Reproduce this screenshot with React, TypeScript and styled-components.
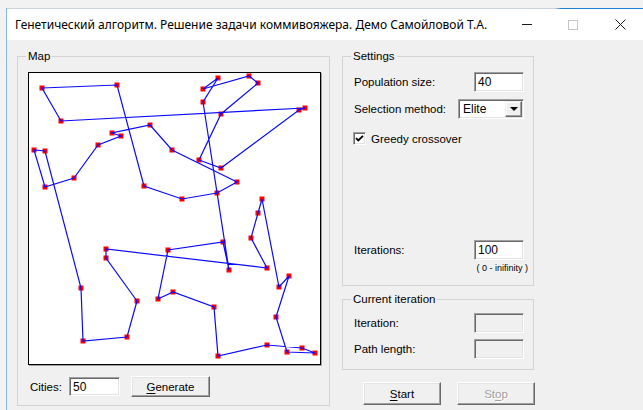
import React from 'react';
import styled, { createGlobalStyle } from 'styled-components';

const GlobalStyle = createGlobalStyle`
  html, body { margin: 0; padding: 0; }
  body {
    background: #f2f2f2;
    font-family: "Liberation Sans", Arial, sans-serif;
    color: #000;
  }
`;

// tour in visiting order, page coordinates
const tour: [number, number][] = [
  [42, 88], [117, 85], [144, 186], [182, 199], [217, 193], [237, 182], [172, 150], [150, 125],
  [112, 133], [121, 136], [98, 145], [74, 178], [45, 187], [34, 150], [45, 151], [81, 288],
  [83, 341], [127, 337], [137, 301], [106, 258], [106, 249], [267, 268], [251, 238], [258, 213],
  [262, 199], [279, 287], [289, 276], [276, 317], [287, 352], [315, 353], [302, 348], [267, 345],
  [218, 356], [214, 307], [173, 292], [158, 299], [168, 250], [223, 242], [229, 270], [203, 102],
  [218, 78], [203, 89], [249, 76], [258, 83], [221, 114], [199, 160], [221, 168], [299, 110],
  [305, 108], [61, 121],
];

const Screen = styled.div`
  width: 643px;
  height: 410px;
  overflow: hidden;
  box-sizing: border-box;
  padding: 8px 0 0 6px;
  background: #f2f2f2;
`;

const Window = styled.div`
  width: 638px;
  height: 402px;
  box-sizing: border-box;
  border-left: 1px solid #86b6e0;
  display: flex;
  flex-direction: column;
  background: #f0f0f0;
`;

const AccentLine = styled.div`
  height: 1px;
  background: linear-gradient(to right, #c9d2db 0%, #c9d2db 86%, #1a7fd6 87%, #1a7fd6 100%);
`;

const TitleBar = styled.div`
  height: 31px;
  background: #fff;
  display: flex;
  align-items: center;
  padding-left: 8px;
`;

const Title = styled.div`
  flex: 1;
  font-family: "Noto Sans", "Open Sans", sans-serif;
  font-size: 12px;
  white-space: nowrap;
  overflow: hidden;
`;

const CaptionButton = styled.div<{ $w: number }>`
  width: ${p => p.$w}px;
  height: 31px;
  display: flex;
  align-items: center;
  justify-content: center;
`;

const MinGlyph = styled.div`
  width: 10px;
  height: 1px;
  background: #1a1a1a;
`;

const MaxGlyph = styled.div`
  width: 10px;
  height: 10px;
  box-sizing: border-box;
  border: 1px solid #c6c6c6;
`;

const Client = styled.div`
  flex: 1;
  display: flex;
  gap: 12px;
  padding: 10px 0 0 10px;
`;

const Group = styled.fieldset<{ $w: number; $h: number }>`
  margin: 0;
  padding: 0;
  min-width: 0;
  box-sizing: border-box;
  width: ${p => p.$w}px;
  height: ${p => p.$h}px;
  border: 1px solid #d3d3d3;
`;

const Legend = styled.legend`
  margin-left: 8px;
  padding: 0 2px;
  font-size: 11.5px;
  line-height: 13px;
`;

const MapBody = styled.div`
  padding: 9px 10px 0 10px;
`;

const Canvas = styled.div`
  width: 293px;
  height: 293px;
  box-sizing: border-box;
  background: #fff;
  border: 1px solid #000;
  box-shadow: 1px 1px 0 #a0a0a0;
  svg { display: block; }
`;

const CitiesRow = styled.div`
  margin-top: 11px;
  height: 21px;
  display: flex;
  align-items: center;
  padding-left: 2px;
`;

const Label = styled.span`
  font-size: 11.5px;
  white-space: nowrap;
`;

const TextBox = styled.input<{ $w: number }>`
  width: ${p => p.$w}px;
  height: 20px;
  box-sizing: border-box;
  margin: 0;
  padding: 0 0 0 3px;
  background: #fff;
  border-style: solid;
  border-width: 1px;
  border-color: #a0a0a0 #fff #fff #a0a0a0;
  box-shadow: inset 1px 1px 0 #696969, inset -1px -1px 0 #e3e3e3;
  font-family: "Liberation Sans", Arial, sans-serif;
  font-size: 12px;
  color: #000;
  outline: none;
  &:disabled { background: #f0f0f0; }
`;

const Button = styled.button<{ $w: number; $h: number }>`
  width: ${p => p.$w}px;
  height: ${p => p.$h}px;
  margin: 0;
  padding: 0;
  background: #f0f0f0;
  border-style: solid;
  border-width: 1px;
  border-color: #fff #696969 #696969 #fff;
  box-shadow: inset -1px -1px 0 #a0a0a0, inset 1px 1px 0 #e3e3e3;
  font-family: "Liberation Sans", Arial, sans-serif;
  font-size: 11.5px;
  color: #000;
  &:disabled { color: #a0a0a0; text-shadow: 1px 1px 0 #fff; }
  u { text-decoration-thickness: 1px; text-underline-offset: 2px; }
`;

const RightColumn = styled.div`
  display: flex;
  flex-direction: column;
`;

const SettingsBody = styled.div`
  height: 222px;
  display: flex;
  flex-direction: column;
  padding: 9px 9px 11px 11px;
  box-sizing: border-box;
`;

const Row = styled.div<{ $gap?: number }>`
  height: 20px;
  margin-top: ${p => p.$gap ?? 0}px;
  display: flex;
  align-items: center;
  justify-content: space-between;
`;

const Combo = styled.div`
  width: 66px;
  height: 20px;
  box-sizing: border-box;
  background: #fff;
  border-style: solid;
  border-width: 1px;
  border-color: #a0a0a0 #fff #fff #a0a0a0;
  box-shadow: inset 1px 1px 0 #696969, inset -1px -1px 0 #e3e3e3;
  display: flex;
  align-items: center;
  padding: 1px 1px 1px 4px;
  font-size: 12px;
`;

const ComboText = styled.span`
  flex: 1;
`;

const DropButton = styled.div`
  width: 17px;
  height: 16px;
  box-sizing: border-box;
  background: #f0f0f0;
  border-style: solid;
  border-width: 1px;
  border-color: #f0f0f0 #696969 #696969 #f0f0f0;
  box-shadow: inset -1px -1px 0 #a0a0a0, inset 1px 1px 0 #fff;
  display: flex;
  align-items: center;
  justify-content: center;
  &::after {
    content: "";
    border-left: 4px solid transparent;
    border-right: 4px solid transparent;
    border-top: 4px solid #000;
  }
`;

const CheckRow = styled.label`
  margin-top: 13px;
  height: 13px;
  display: flex;
  align-items: center;
  gap: 5px;
  margin-left: -1px;
`;

const CheckBox = styled.div`
  width: 13px;
  height: 13px;
  box-sizing: border-box;
  background: #fff;
  border-style: solid;
  border-width: 1px;
  border-color: #a0a0a0 #fff #fff #a0a0a0;
  box-shadow: inset 1px 1px 0 #696969, inset -1px -1px 0 #e3e3e3;
  display: flex;
  align-items: center;
  justify-content: center;
  svg { display: block; }
`;

const Spacer = styled.div`
  flex: 1;
`;

const Hint = styled.div`
  height: 12px;
  margin-top: 2px;
  margin-right: -4px;
  text-align: right;
  font-size: 9px;
  line-height: 12px;
`;

const IterBody = styled.div`
  padding: 7px 9px 0 11px;
`;

const ButtonRow = styled.div`
  margin-top: 12px;
  padding-left: 21px;
  display: flex;
  gap: 16px;
`;

const MapView = () => {
  const path = tour.map(([x, y], i) => `${i ? 'L' : 'M'}${x} ${y}`).join(' ') + ' Z';
  return (
    <svg width={291} height={291} viewBox="29 73 291 291">
      {tour.map(([x, y], i) => (
        <rect key={i} x={x - 2.5} y={y - 2.5} width={5} height={5} fill="#ff0000" />
      ))}
      <path d={path} fill="none" stroke="#0a0aff" strokeWidth={1.2} />
    </svg>
  );
};

export default function App() {
  return (
    <Screen>
      <GlobalStyle />
      <Window>
        <AccentLine />
        <TitleBar>
          <Title>Генетический алгоритм. Решение задачи коммивояжера. Демо Самойловой Т.А.</Title>
          <CaptionButton $w={46}><MinGlyph /></CaptionButton>
          <CaptionButton $w={46}><MaxGlyph /></CaptionButton>
          <CaptionButton $w={48}>
            <svg width="11" height="11" viewBox="0 0 11 11">
              <path d="M0.5 0.5 L10.5 10.5 M10.5 0.5 L0.5 10.5" stroke="#1a1a1a" strokeWidth="1" />
            </svg>
          </CaptionButton>
        </TitleBar>
        <Client>
          <Group $w={313} $h={356}>
            <Legend>Map</Legend>
            <MapBody>
              <Canvas><MapView /></Canvas>
              <CitiesRow>
                <Label>Cities:</Label>
                <TextBox $w={51} style={{ marginLeft: 7, height: 19 }} defaultValue="50" />
                <Button $w={79} $h={21} style={{ marginLeft: 11 }}><u>G</u>enerate</Button>
              </CitiesRow>
            </MapBody>
          </Group>
          <RightColumn>
            <Group $w={192} $h={236}>
              <Legend>Settings</Legend>
              <SettingsBody>
                <Row>
                  <Label>Population size:</Label>
                  <TextBox $w={50} defaultValue="40" />
                </Row>
                <Row $gap={7}>
                  <Label>Selection method:</Label>
                  <Combo>
                    <ComboText>Elite</ComboText>
                    <DropButton />
                  </Combo>
                </Row>
                <CheckRow>
                  <CheckBox>
                    <svg width="9" height="9" viewBox="0 0 9 9">
                      <path d="M1 4.2 L3.3 6.5 L8 1.8" fill="none" stroke="#000" strokeWidth="1.8" />
                    </svg>
                  </CheckBox>
                  <Label>Greedy crossover</Label>
                </CheckRow>
                <Spacer />
                <Row>
                  <Label>Iterations:</Label>
                  <TextBox $w={50} defaultValue="100" />
                </Row>
                <Hint>( 0 - inifinity )</Hint>
              </SettingsBody>
            </Group>
            <Group $w={192} $h={77} style={{ marginTop: 7 }}>
              <Legend>Current iteration</Legend>
              <IterBody>
                <Row>
                  <Label>Iteration:</Label>
                  <TextBox $w={50} disabled />
                </Row>
                <Row $gap={6}>
                  <Label>Path length:</Label>
                  <TextBox $w={50} disabled />
                </Row>
              </IterBody>
            </Group>
            <ButtonRow>
              <Button $w={78} $h={23}><u>S</u>tart</Button>
              <Button $w={78} $h={23} disabled>St<u>o</u>p</Button>
            </ButtonRow>
          </RightColumn>
        </Client>
      </Window>
    </Screen>
  );
}
